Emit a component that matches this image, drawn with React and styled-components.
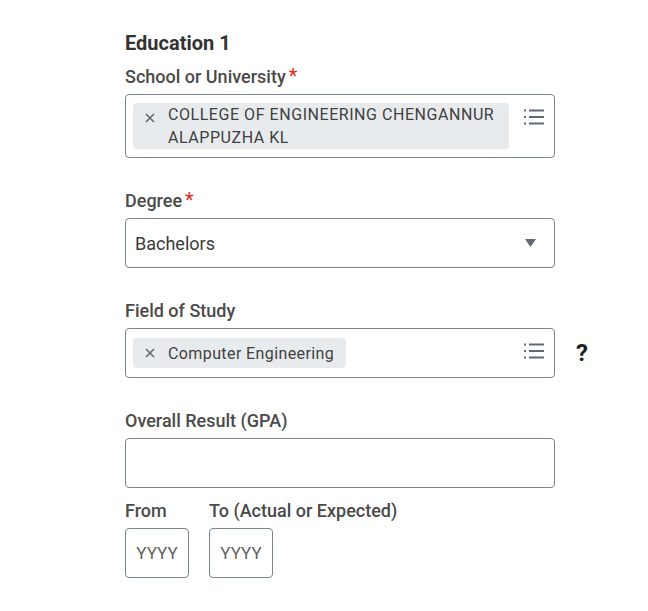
import React from "react";
import styled, { createGlobalStyle } from "styled-components";

const GlobalStyle = createGlobalStyle`
  * { box-sizing: border-box; }
  body {
    margin: 0;
    background: #ffffff;
    font-family: Roboto, "Liberation Sans", Arial, sans-serif;
  }
`;

const Page = styled.div`
  padding: 31px 0 0 125px;
  width: 648px;
`;

const Heading = styled.h3`
  margin: 0 0 10px;
  font-size: 20px;
  line-height: 24px;
  font-weight: 700;
  color: #333333;
`;

const Field = styled.div`
  margin-bottom: ${(p) => p.$gap ?? 31}px;
`;

const Label = styled.label`
  display: flex;
  align-items: flex-start;
  margin-bottom: 5px;
  font-size: 18px;
  line-height: 24px;
  font-weight: 500;
  color: #4a4a4a;
`;

const Required = styled.span`
  margin-left: 3px;
  color: #de2e21;
  font-size: 20px;
  line-height: 22px;
  font-weight: 400;
`;

const Row = styled.div`
  display: flex;
  align-items: center;
`;

const Box = styled.div`
  display: flex;
  align-items: center;
  width: 430px;
  min-height: 50px;
  padding: 8px 8px 8px 7px;
  border: 1px solid #7b858f;
  border-radius: 4px;
  background: #ffffff;
  color: #333333;
`;

const Pills = styled.div`
  flex: 1;
  min-width: 0;
  display: flex;
  align-items: center;
`;

const Pill = styled.div`
  display: inline-flex;
  align-items: flex-start;
  min-height: 30px;
  padding: 0 12px;
  border-radius: 4px;
  background: #e8ebed;
  color: #404040;
  font-size: 16px;
  line-height: 23px;
  letter-spacing: ${(p) => (p.$caps ? "0.55px" : "0.4px")};
`;

const PillText = styled.span`
  align-self: center;
`;

const Remove = styled.span`
  display: flex;
  align-items: center;
  height: 30px;
  margin-right: 13px;
  color: #5e6a75;
`;

const IconSlot = styled.span`
  display: flex;
  align-self: flex-start;
  margin: 2px 0 0 13px;
  color: #5e6a75;
`;

const Value = styled.span`
  flex: 1;
  padding-left: 2px;
  font-size: 18px;
  color: #3a3a3a;
`;

const Caret = styled.span`
  display: flex;
  margin-right: 10px;
  color: #5e6a75;
`;

const Help = styled.span`
  margin-left: 21px;
  font-size: 24px;
  font-weight: 700;
  color: #1e1e1e;
  line-height: 28px;
`;

const DateRow = styled.div`
  display: flex;
  gap: 20px;
`;

const YearBox = styled.div`
  display: flex;
  align-items: center;
  justify-content: center;
  width: 64px;
  height: 50px;
  border: 1px solid #7b858f;
  border-radius: 4px;
  font-size: 17px;
  color: #5f5f5f;
`;

const XIcon = () => (
  <svg width="10" height="10" viewBox="0 0 10 10">
    <path d="M1 1L9 9M9 1L1 9" stroke="currentColor" strokeWidth="1.6" />
  </svg>
);

const ListIcon = () => (
  <svg width="24" height="24" viewBox="0 0 24 24" fill="currentColor">
    <rect x="2" y="4.5" width="2" height="2" />
    <rect x="2" y="11" width="2" height="2" />
    <rect x="2" y="17.5" width="2" height="2" />
    <rect x="7" y="4.5" width="15" height="2" />
    <rect x="7" y="11" width="15" height="2" />
    <rect x="7" y="17.5" width="15" height="2" />
  </svg>
);

const CaretIcon = () => (
  <svg width="11" height="8" viewBox="0 0 11 8" fill="currentColor">
    <polygon points="0,0 11,0 5.5,8" />
  </svg>
);

function PillInput({ children, caps }) {
  return (
    <Box>
      <Pills>
        <Pill $caps={caps}>
          <Remove>
            <XIcon />
          </Remove>
          <PillText>{children}</PillText>
        </Pill>
      </Pills>
      <IconSlot>
        <ListIcon />
      </IconSlot>
    </Box>
  );
}

export default function App() {
  return (
    <>
      <GlobalStyle />
      <Page>
        <Heading>Education 1</Heading>

        <Field>
          <Label>
            School or University<Required>*</Required>
          </Label>
          <PillInput caps>COLLEGE OF ENGINEERING CHENGANNUR ALAPPUZHA KL</PillInput>
        </Field>

        <Field>
          <Label>
            Degree<Required>*</Required>
          </Label>
          <Box>
            <Value>Bachelors</Value>
            <Caret>
              <CaretIcon />
            </Caret>
          </Box>
        </Field>

        <Field>
          <Label>Field of Study</Label>
          <Row>
            <PillInput>Computer Engineering</PillInput>
            <Help>?</Help>
          </Row>
        </Field>

        <Field $gap={11}>
          <Label>Overall Result (GPA)</Label>
          <Box />
        </Field>

        <DateRow>
          <div>
            <Label>From</Label>
            <YearBox>YYYY</YearBox>
          </div>
          <div>
            <Label>To (Actual or Expected)</Label>
            <YearBox>YYYY</YearBox>
          </div>
        </DateRow>
      </Page>
    </>
  );
}
